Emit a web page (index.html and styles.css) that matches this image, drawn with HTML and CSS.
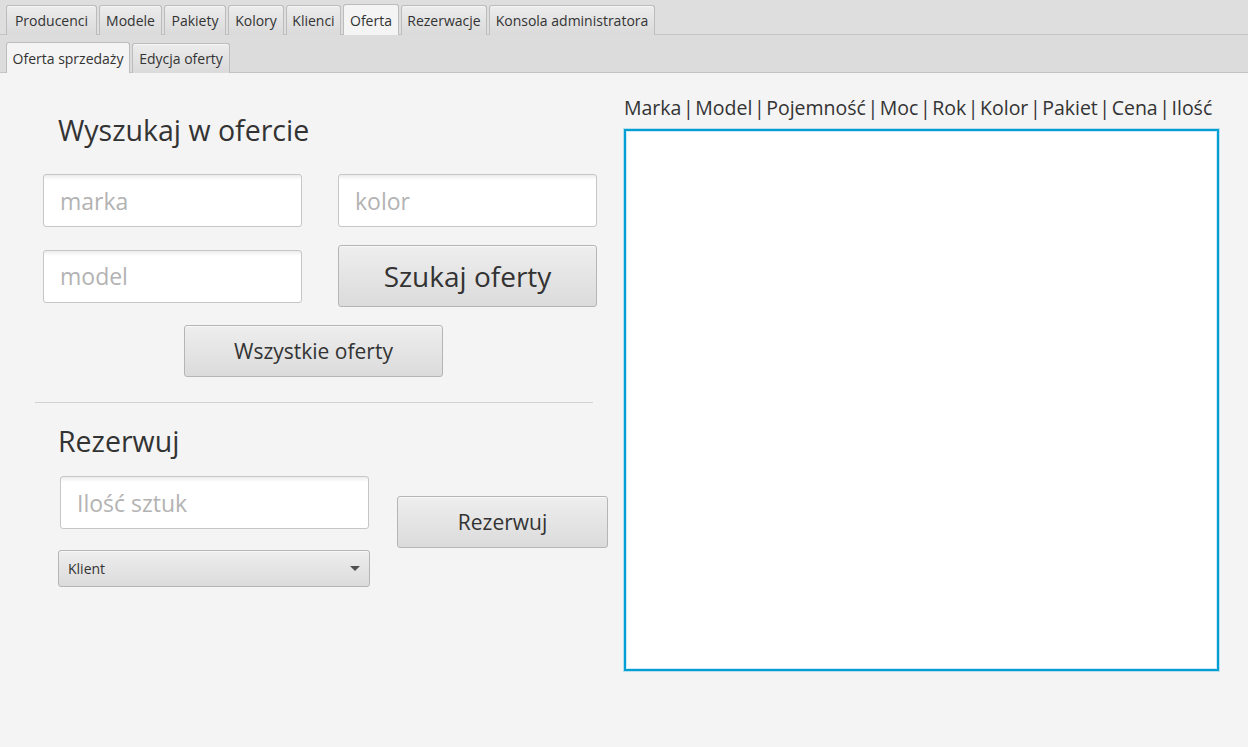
FILE: index.html
```html
<!DOCTYPE html>
<html lang="pl">
<head>
<meta charset="utf-8">
<title>Oferta</title>
<link rel="stylesheet" href="styles.css">
</head>
<body>
<nav class="tabs tabs-main">
  <div class="tab">Producenci</div>
  <div class="tab">Modele</div>
  <div class="tab">Pakiety</div>
  <div class="tab">Kolory</div>
  <div class="tab">Klienci</div>
  <div class="tab selected">Oferta</div>
  <div class="tab">Rezerwacje</div>
  <div class="tab">Konsola administratora</div>
</nav>
<nav class="tabs tabs-sub">
  <div class="tab selected">Oferta sprzedaży</div>
  <div class="tab">Edycja oferty</div>
</nav>
<main class="content">
  <section class="left">
    <h1 class="title title-search">Wyszukaj w ofercie</h1>
    <div class="search-grid">
      <input class="field" type="text" placeholder="marka">
      <input class="field" type="text" placeholder="kolor">
      <input class="field" type="text" placeholder="model">
      <button class="btn btn-search">Szukaj oferty</button>
    </div>
    <button class="btn btn-all">Wszystkie oferty</button>
    <div class="separator"></div>
    <h1 class="title title-reserve">Rezerwuj</h1>
    <div class="reserve">
      <div class="reserve-col">
        <input class="field field-qty" type="text" placeholder="Ilość sztuk">
        <div class="combo"><span>Klient</span><span class="arrow"></span></div>
      </div>
      <button class="btn btn-reserve">Rezerwuj</button>
    </div>
  </section>
  <section class="right">
    <div class="columns">Marka | Model | Pojemność | Moc | Rok | Kolor | Pakiet | Cena | Ilość</div>
    <div class="list"></div>
  </section>
</main>
</body>
</html>
```

FILE: styles.css
```css
* { box-sizing: border-box; }
html, body {
  margin: 0;
  padding: 0;
  width: 1248px;
  height: 747px;
  overflow: hidden;
  background: #f4f4f4;
  font-family: "Open Sans", "Noto Sans", sans-serif;
  color: #333333;
}

.tabs {
  display: flex;
  align-items: flex-end;
  gap: 2px;
  padding-left: 6px;
  background: #dedede;
  border-bottom: 1px solid #c4c4c4;
}
.tabs-main { height: 35px; }
.tabs-sub { height: 38px; background: #dcdcdc; }

.tab {
  flex: none;
  height: 30px;
  padding: 0;
  display: flex;
  align-items: center;
  justify-content: center;
  font-size: 14px;
  color: #333;
  border: 1px solid #bcbcbc;
  border-bottom: none;
  border-radius: 3px 3px 0 0;
  background: linear-gradient(#ececec, #dadada);
  box-shadow: inset 0 1px 0 #f6f6f6;
  margin-bottom: -1px;
  white-space: nowrap;
}
.tab.selected {
  background: #f4f4f4;
  box-shadow: none;
  height: 31px;
}

.tabs-main .tab:nth-child(1) { width: 91px; }
.tabs-main .tab:nth-child(2) { width: 63px; }
.tabs-main .tab:nth-child(3) { width: 62px; }
.tabs-main .tab:nth-child(4) { width: 56px; }
.tabs-main .tab:nth-child(5) { width: 55px; }
.tabs-main .tab:nth-child(6) { width: 56px; }
.tabs-main .tab:nth-child(7) { width: 86px; }
.tabs-main .tab:nth-child(8) { width: 166px; }
.tabs-sub .tab:nth-child(1) { width: 124px; }
.tabs-sub .tab:nth-child(2) { width: 98px; }

.content {
  display: flex;
  height: 674px;
}

.left {
  width: 623px;
  flex: none;
  display: flex;
  flex-direction: column;
  align-items: flex-start;
}

.title {
  margin: 0;
  font-weight: normal;
  font-size: 28.5px;
  line-height: 36px;
  color: #333;
  padding-left: 58px;
}
.title-search { margin-top: 39px; }
.title-reserve { margin-top: 20px; }

.field {
  display: block;
  height: 53px;
  border: 1px solid #c6c6c6;
  border-radius: 3px;
  background: linear-gradient(#ececec 0px, #ffffff 5px);
  font-family: inherit;
  font-size: 23px;
  padding: 0 0 0 16px;
  color: #333;
  outline: none;
  margin: 0;
}
.field::placeholder { color: #b3b3b3; }

.search-grid {
  margin-top: 26px;
  margin-left: 43px;
  display: grid;
  grid-template-columns: 259px 259px;
  column-gap: 36px;
  row-gap: 18px;
  align-items: center;
}
.search-grid .field { width: 259px; }

.btn {
  display: flex;
  align-items: center;
  justify-content: center;
  font-family: inherit;
  color: #333;
  border: 1px solid #b5b5b5;
  border-radius: 3px;
  background: linear-gradient(#eeeeee, #dbdbdb);
  box-shadow: inset 0 1px 0 #f8f8f8;
  padding: 0;
  margin: 0;
}
.btn-search {
  height: 62px;
  width: 259px;
  font-size: 28px;
}
.btn-all {
  margin-top: 18px;
  margin-left: 184px;
  width: 259px;
  height: 52px;
  font-size: 21px;
}

.separator {
  margin-top: 25px;
  margin-left: 35px;
  width: 558px;
  height: 1px;
  background: #d2d2d2;
}

.reserve {
  margin-top: 17px;
  margin-left: 58px;
  display: flex;
  align-items: flex-start;
  gap: 27px;
}
.reserve-col {
  width: 312px;
  display: flex;
  flex-direction: column;
  gap: 21px;
}
.field-qty {
  width: 309px;
  margin-left: 2px;
}
.combo {
  height: 37px;
  border: 1px solid #b5b5b5;
  border-radius: 3px;
  background: linear-gradient(#eeeeee, #dbdbdb);
  box-shadow: inset 0 1px 0 #f8f8f8;
  display: flex;
  align-items: center;
  justify-content: space-between;
  padding: 0 9px 0 9px;
  font-size: 14px;
  color: #333;
}
.arrow {
  width: 0;
  height: 0;
  border-left: 5px solid transparent;
  border-right: 5px solid transparent;
  border-top: 5px solid #505050;
}
.btn-reserve {
  margin-top: 20px;
  width: 211px;
  height: 52px;
  font-size: 21px;
}

.right {
  flex: 1;
  display: flex;
  flex-direction: column;
  padding-top: 22px;
}
.columns {
  font-size: 19.5px;
  line-height: 26px;
  padding-left: 1px;
  color: #333;
  white-space: nowrap;
  word-spacing: -3.5px;
}
.list {
  margin-top: 8px;
  margin-left: 1px;
  width: 595px;
  height: 542px;
  background: #ffffff;
  border: 2px solid #039ed3;
  box-shadow: 0 0 0 1px rgba(3, 158, 211, 0.25), inset 0 0 0 1px #cdeaf6;
}
```
